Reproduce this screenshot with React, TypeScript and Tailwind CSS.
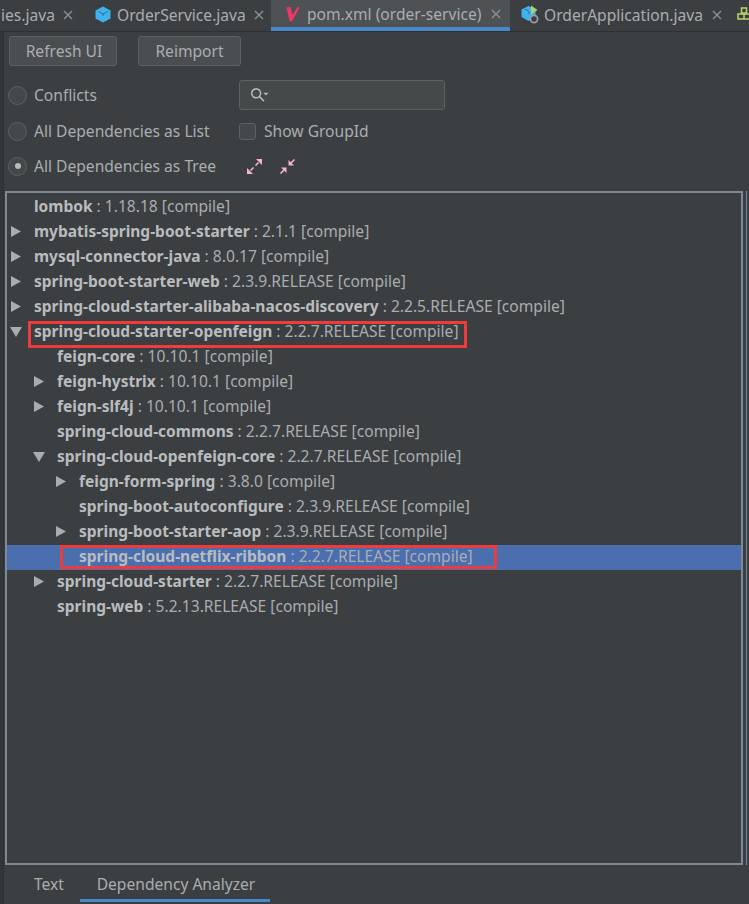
const font = { fontFamily: '"Noto Sans", "Open Sans", sans-serif' }

type Row = { name: string; version: string; level: number; arrow?: 'right' | 'down'; selected?: boolean }

const rows: Row[] = [
  { name: 'lombok', version: '1.18.18', level: 0 },
  { name: 'mybatis-spring-boot-starter', version: '2.1.1', level: 0, arrow: 'right' },
  { name: 'mysql-connector-java', version: '8.0.17', level: 0, arrow: 'right' },
  { name: 'spring-boot-starter-web', version: '2.3.9.RELEASE', level: 0, arrow: 'right' },
  { name: 'spring-cloud-starter-alibaba-nacos-discovery', version: '2.2.5.RELEASE', level: 0, arrow: 'right' },
  { name: 'spring-cloud-starter-openfeign', version: '2.2.7.RELEASE', level: 0, arrow: 'down' },
  { name: 'feign-core', version: '10.10.1', level: 1 },
  { name: 'feign-hystrix', version: '10.10.1', level: 1, arrow: 'right' },
  { name: 'feign-slf4j', version: '10.10.1', level: 1, arrow: 'right' },
  { name: 'spring-cloud-commons', version: '2.2.7.RELEASE', level: 1 },
  { name: 'spring-cloud-openfeign-core', version: '2.2.7.RELEASE', level: 1, arrow: 'down' },
  { name: 'feign-form-spring', version: '3.8.0', level: 2, arrow: 'right' },
  { name: 'spring-boot-autoconfigure', version: '2.3.9.RELEASE', level: 2 },
  { name: 'spring-boot-starter-aop', version: '2.3.9.RELEASE', level: 2, arrow: 'right' },
  { name: 'spring-cloud-netflix-ribbon', version: '2.2.7.RELEASE', level: 2, selected: true },
  { name: 'spring-cloud-starter', version: '2.2.7.RELEASE', level: 1, arrow: 'right' },
  { name: 'spring-web', version: '5.2.13.RELEASE', level: 1 },
]

const indents = [3, 26, 48]

function Arrow({ dir }: { dir?: 'right' | 'down' }) {
  if (!dir) return <span className="w-[13px] h-[13px] shrink-0" />
  return (
    <svg className="w-[13px] h-[13px] shrink-0" viewBox="0 0 13 13">
      {dir === 'right' ? <path d="M1 1 L11 6.5 L1 12 Z" fill="#a9adb0" /> : <path d="M0 2 L12 2 L6 12 Z" fill="#a9adb0" />}
    </svg>
  )
}

function Radio({ checked }: { checked?: boolean }) {
  return (
    <span className="w-[19px] h-[19px] rounded-full border border-[#5e6162] bg-[#43484a] flex items-center justify-center shrink-0">
      {checked && <span className="w-[6px] h-[6px] rounded-full bg-[#b8bbbc]" />}
    </span>
  )
}

function CloseX() {
  return (
    <svg className="w-[10px] h-[10px] shrink-0" viewBox="0 0 10 10" fill="none" stroke="#8f9396" strokeWidth="1.3">
      <path d="M1 1 L9 9 M9 1 L1 9" />
    </svg>
  )
}

function CubeIcon() {
  return (
    <svg width="16" height="17" viewBox="0 0 16 17" className="shrink-0">
      <path d="M8 0.5 L15.5 4.5 V12.5 L8 16.5 L0.5 12.5 V4.5 Z" fill="#3fb2f0" />
      <path d="M3.5 5.5 L8 8 L12.5 5.5 M8 8 V10" fill="none" stroke="#2a6f98" strokeWidth="1" />
    </svg>
  )
}

function AppIcon() {
  return (
    <svg width="19" height="19" viewBox="0 0 19 19" className="shrink-0">
      <path d="M7.5 1 L14.5 4.5 V12 L7.5 16 L0.5 12 V4.5 Z" fill="#3fb2f0" />
      <path d="M10 0.5 L16.5 5 L10 9.5 Z" fill="#a6d46a" />
      <path d="M4 4 L8 6.5 V9" fill="none" stroke="#2a6f98" strokeWidth="1" />
      <circle cx="13" cy="14" r="3.6" fill="#3c3f41" stroke="#9a9ea1" strokeWidth="1.8" />
    </svg>
  )
}

function ExpandIcon({ inward }: { inward?: boolean }) {
  return (
    <svg className="w-[17px] h-[17px]" viewBox="0 0 17 17" fill="#f4b4cf" stroke="#f4b4cf" strokeWidth="1.6">
      {inward ? (
        <>
          <path d="M9.5 7.5 V2 L15 7.5 Z" stroke="none" />
          <path d="M12 5 L15.5 1.5" />
          <path d="M7.5 9.5 V15 L2 9.5 Z" stroke="none" />
          <path d="M5 12 L1.5 15.5" />
        </>
      ) : (
        <>
          <path d="M16 1 H10 L16 7 Z" stroke="none" />
          <path d="M12.5 4.5 L9.5 7.5" />
          <path d="M1 16 H7 L1 10 Z" stroke="none" />
          <path d="M4.5 12.5 L7.5 9.5" />
        </>
      )}
    </svg>
  )
}

export default function App() {
  return (
    <div style={font} className="w-[749px] h-[904px] bg-[#3c3f41] text-[#b4b8ba] text-[15.6px] overflow-hidden flex flex-col">
      {/* Editor tabs */}
      <div className="h-[32px] shrink-0 flex border-b border-[#2f3234] overflow-hidden leading-[20px] text-[#a9adb0]">
        <div className="w-[87px] pl-[1px] pb-[2px] flex items-center gap-[8px] shrink-0">
          <span>ies.java</span>
          <CloseX />
        </div>
        <div className="w-[184px] pl-[8px] pb-[2px] flex items-center gap-[6px] shrink-0">
          <CubeIcon />
          <span>OrderService.java</span>
          <span className="ml-[2px]"><CloseX /></span>
        </div>
        <div className="w-[239px] pl-[15px] bg-[#4e5254] border-b-[4px] border-[#4a88c7] flex items-center gap-[7px] shrink-0">
          <svg width="14" height="16" viewBox="0 0 14 16" className="shrink-0">
            <path d="M0.5 1.5 L4.5 1 L6.5 9 L12 0.5 L13.5 1.5 L6 15.5 L3.5 15 Z" fill="#f0356b" />
          </svg>
          <span>pom.xml (order-service)</span>
          <span className="ml-[3px]"><CloseX /></span>
        </div>
        <div className="pl-[11px] pb-[2px] flex items-center gap-[4px] shrink-0">
          <AppIcon />
          <span>OrderApplication.java</span>
          <span className="ml-[5px]"><CloseX /></span>
        </div>
        <svg width="14" height="14" viewBox="0 0 14 14" className="shrink-0 ml-[15px] mt-[7px]" fill="none" stroke="#b5d56a" strokeWidth="1.5">
          <path d="M4.5 1 H9.5 V6 H4.5 Z M1 7 H7 V12 H1 Z M7 7 H13 V12 H7 Z" />
        </svg>
      </div>

      <div className="flex-1 min-h-0 flex">
        <div className="w-[4px] shrink-0 bg-[#34373a] border-r border-[#2f3234]" />
        <div className="flex-1 min-w-0 flex flex-col pl-[1px]">
          {/* Toolbar */}
          <div className="flex gap-[21px] pl-[4px] mt-[4px] shrink-0">
            <button className="w-[108px] h-[30px] pt-[2px] pl-[2px] rounded-[3px] border border-[#5e6162] bg-[#4a4e50] text-[#a9adb0]">Refresh UI</button>
            <button className="w-[103px] h-[30px] pt-[2px] rounded-[3px] border border-[#5e6162] bg-[#4a4e50] text-[#a9adb0]">Reimport</button>
          </div>

          {/* Options */}
          <div className="grid grid-cols-[231px_206px] mt-[14px] pl-[3px] shrink-0 text-[#a9adb0]">
            <div className="h-[30px] flex items-center gap-[7px]"><Radio /><span className="mt-[2px]">Conflicts</span></div>
            <div className="h-[30px] rounded-[3px] border border-[#5e6162] bg-[#45494a] flex items-center pl-[10px]">
              <svg className="w-[19px] h-[16px]" viewBox="0 0 17 14" fill="none" stroke="#b4b8ba" strokeWidth="1.4">
                <circle cx="5.5" cy="5.5" r="4" />
                <path d="M8.5 8.5 L12.5 12.5" />
                <path d="M12 5 H16.5 L14.25 7.5 Z" fill="#b4b8ba" stroke="none" />
              </svg>
            </div>
            <div className="h-[28px] mt-[7px] flex items-center gap-[7px]"><Radio /><span className="mt-[2px]">All Dependencies as List</span></div>
            <div className="h-[28px] mt-[7px] flex items-center gap-[8px]">
              <span className="w-[17px] h-[17px] rounded-[3px] border border-[#5e6162] bg-[#43484a]" />
              <span className="mt-[2px]">Show GroupId</span>
            </div>
            <div className="h-[28px] mt-[7px] flex items-center gap-[7px]"><Radio checked /><span className="mt-[2px]">All Dependencies as Tree</span></div>
            <div className="h-[28px] mt-[7px] flex items-center gap-[16px] pl-[7px]">
              <ExpandIcon />
              <ExpandIcon inward />
            </div>
          </div>

          {/* Tree */}
          <div className="mt-[11px] h-[674px] w-[738px] shrink-0 border-2 border-[#7b8a96] pt-[2px] relative">
            {rows.map((r) => (
              <div key={r.name} className={`h-[25px] pb-[2px] flex items-center whitespace-nowrap ${r.selected ? 'bg-[#4b6eaf]' : ''}`}>
                <span style={{ width: indents[r.level] }} className="shrink-0" />
                <Arrow dir={r.arrow} />
                <span className="w-[11px] shrink-0" />
                <span className="font-bold text-[15.5px] text-[#b9bcbe]">{r.name}</span>
                <span className="text-[#a9adb0]">&nbsp;: {r.version} [compile]</span>
              </div>
            ))}
            {/* Red annotation boxes */}
            <div className="absolute left-[21px] top-[128px] w-[439px] h-[27px] border-[3px] border-[#ee3b3b]" />
            <div className="absolute left-[53px] top-[352px] w-[437px] h-[24px] border-[3px] border-[#ee3b3b]" />
            {/* Neighbouring panel edge */}
            <div className="absolute right-[-6px] top-[-2px] bottom-[-2px] w-[1px] bg-[#7b8a96]" />
          </div>

          {/* Bottom tabs */}
          <div className="flex-1 flex text-[#a9adb0]">
            <span className="w-[75px] pl-[29px] pt-[8px]">Text</span>
            <span className="w-[190px] h-[37px] pt-[8px] pl-[2px] text-center border-b-[3px] border-[#4a88c7]">Dependency Analyzer</span>
          </div>
        </div>
      </div>
    </div>
  )
}
